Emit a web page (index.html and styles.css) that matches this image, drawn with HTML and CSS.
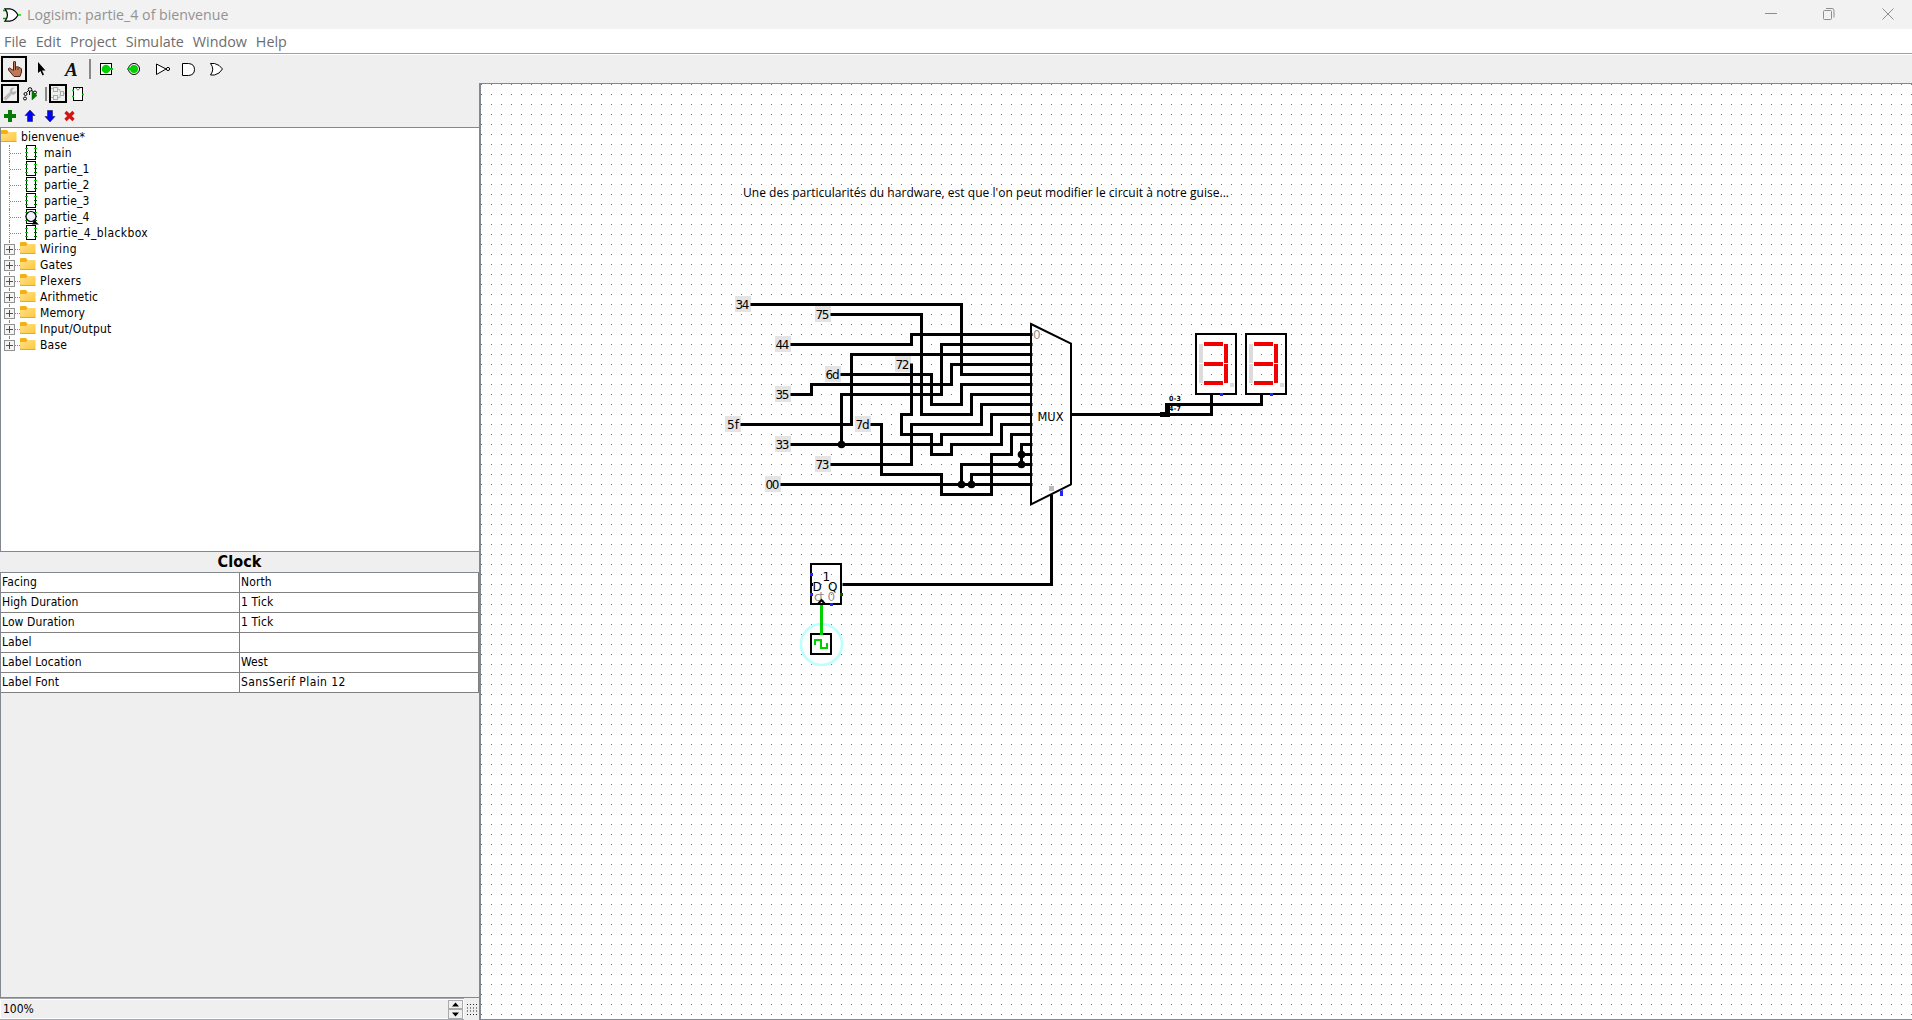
FILE: index.html
```html
<!DOCTYPE html>
<html lang="fr">
<head>
<meta charset="utf-8">
<title>Logisim: partie_4 of bienvenue</title>
<link rel="stylesheet" href="styles.css">
</head>
<body>
<svg class="defs" width="0" height="0">
  <defs>
    <linearGradient id="gold" x1="0" y1="0" x2="1" y2="1"><stop offset="0" stop-color="#ffe08a"/><stop offset="1" stop-color="#ffc83d"/></linearGradient>
    <symbol id="folder" viewBox="0 0 16 16"><path d="M0 3V2q0-1 1-1h5l1.500 2H15v3H0z" fill="#f5b010"/><path d="M0 5h6l1.500-2H15.500V12.500H0z" fill="url(#gold)"/><path d="M0 12.500h15.500" stroke="#eda720"/></symbol>
    <symbol id="chip" viewBox="0 0 17 16"><rect x="6.500" y=".5" width="9" height="14" fill="#fff" stroke="#000"/><path d="M5 3.500h3M5 7.500h3M5 11.500h3M14 3.500h3" stroke="#0c0"/><path d="M14 7.500h3M14 11.500h3" stroke="#060"/></symbol>
    <symbol id="lens" viewBox="0 0 20 16"><path d="M14 11l5 4.500h-7z" fill="#000"/><circle cx="11" cy="7.500" r="5" fill="#f0f0ff" stroke="#000" stroke-width="1.200"/></symbol>
    <symbol id="plus" viewBox="0 0 11 11"><rect x=".5" y=".5" width="10" height="10" fill="#f4f4f4" stroke="#919191"/><path d="M2 5.500h7M5.500 2v7" stroke="#3a4f8f"/></symbol>
    <pattern id="grid" patternUnits="userSpaceOnUse" x="481" y="84" width="10" height="10"><rect width="1" height="1" fill="#777"/></pattern>
  </defs>
</svg>
<div class="window">
  <header class="titlebar">
    <svg class="app-icon" width="18" height="14" viewBox="0 0 18 14"><path d="M0 2.500h5M0 10.500h5" stroke="#0a0" stroke-width="1.500"/><path d="M2 .8h5q5 .7 8 6.200q-3 5.500-8 6.200H2q5-6 0-12.400z" fill="#fff" stroke="#000" stroke-width="1.200"/><path d="M15 7h3" stroke="#0d0" stroke-width="1.500"/></svg>
    <span class="title">Logisim: partie_4 of bienvenue</span>
    <svg class="controls" width="130" height="16" viewBox="0 0 130 16" fill="none" stroke="#8e8e8e"><path d="M0 6.500h12"/><rect x="58.500" y="3.500" width="8" height="9" rx="1"/><path d="M61 1.500h6q2 0 2 2v7"/><path d="M117.500 1.500l11 11M128.500 1.500l-11 11"/></svg>
  </header>
  <nav class="menubar"><span>File</span><span>Edit</span><span>Project</span><span>Simulate</span><span>Window</span><span>Help</span></nav>
  <div class="toolbar">
    <svg width="240" height="28" viewBox="0 55 240 28" fill="none" stroke="#000">
      <rect x="2" y="57" width="24" height="24" stroke-width="2"/>
      <path d="M13.500 70.500V62q1-2 2 0v5q2-1 5 1l1 1v3l-1.500 4.500h-6L8.500 70q-.5-2 1-2l4 2.500z" fill="#c07858" stroke="#4b2415"/><path d="M15.500 67v3M18 68v2" stroke="#4b2415"/>
      <path d="M38 62v11l2.500-2 2 4.500 1.500-1-2-4h3.500z" fill="#000" stroke="none"/>
      <text x="65" y="76" class="text-tool">A</text>
      <path d="M90 59v20" stroke="#888" stroke-width="2"/>
      <rect x="100.500" y="63.500" width="11" height="11" fill="#fff"/><circle cx="106" cy="69" r="4.300" fill="#00d000" stroke="none"/><path d="M108 69h5" stroke="#00d000" stroke-width="2"/>
      <circle cx="134" cy="69" r="5.500" fill="#fff"/><circle cx="134" cy="69" r="4" fill="#00d000" stroke="none"/><path d="M127 69h5" stroke="#00d000" stroke-width="2"/>
      <path d="M156.500 64v10.500L166 69z" fill="#fff"/><circle cx="168" cy="69" r="1.600" fill="#fff"/>
      <path d="M182.500 63.500h6q6 .5 6 6t-6 6h-6z" fill="#fff"/>
      <path d="M210.500 63.500h4q5 1 8 5.500q-3 5-8 6h-4q4.500-6 0-11.500z" fill="#fff"/>
    </svg>
  </div>
  <div class="main">
    <aside class="explorer">
      <svg class="explorer-tools" width="120" height="44" viewBox="0 83 120 44" fill="none" stroke="#000">
        <rect x="2" y="85" width="16" height="17" stroke-width="2"/>
        <path d="M4.500 99.500l6-6" stroke="#bbb" stroke-width="3.500"/><path d="M10 93.500q-1-3.500 1.500-5.500l3-.5-2.500 3 1 1.500 3.500-1q-.5 3.500-3.500 4z" fill="#b4b4b4" stroke="none"/>
        <circle cx="30" cy="89.500" r="1.800"/><circle cx="25.500" cy="94" r="1.500"/><circle cx="25" cy="98.500" r="1.500"/><circle cx="35" cy="92.500" r="1.500"/><path d="M28.500 90.500l-2 2M31.500 90.500l2 1M29.500 91v4"/><path d="M32 91v9l5-4.500z" fill="#070" stroke="#060" stroke-width=".5"/>
        <path d="M46 87v14" stroke="#888" stroke-width="2"/>
        <rect x="50" y="85" width="16" height="17" stroke-width="2"/>
        <g stroke="#aaa"><rect x="53.500" y="87.500" width="4" height="4"/><rect x="53.500" y="95.500" width="4" height="4"/><rect x="60.500" y="91.500" width="3" height="4"/></g><path d="M51 88.500h2M51 97.500h2M58 89.500h2v3M58 97.500h2v-3M64 93.500h1" stroke="#9c9"/>
        <rect x="73.500" y="87.500" width="9" height="13" fill="#fff"/><path d="M76 88q2 4 4 0" stroke="#777"/><path d="M72 90.500h2M72 96.500h2M82 94.500h2" stroke="#0c0" stroke-width="1.500"/>
        <path d="M4 116h12M10 110v12" stroke="#087a08" stroke-width="4"/>
        <path d="M30 110l5 5.500h-2.500v6h-5v-6H25z" fill="#00f" stroke="#224" stroke-width=".6"/>
        <path d="M50 122l5-5.500h-2.500v-6h-5v6H45z" fill="#00f" stroke="#224" stroke-width=".6"/>
        <path d="M65.500 112l8 8M73.500 112l-8 8" stroke="#d31414" stroke-width="3.200"/>
      </svg>
      <div class="tree">
        <div class="row root"><svg width="16" height="16"><use href="#folder"/></svg><span>bienvenue*</span></div>
        <div class="row leaf"><svg width="20" height="16"><use href="#chip" width="17" height="16"/></svg><span>main</span></div>
        <div class="row leaf"><svg width="20" height="16"><use href="#chip" width="17" height="16"/></svg><span>partie_1</span></div>
        <div class="row leaf"><svg width="20" height="16"><use href="#chip" width="17" height="16"/></svg><span>partie_2</span></div>
        <div class="row leaf"><svg width="20" height="16"><use href="#chip" width="17" height="16"/></svg><span>partie_3</span></div>
        <div class="row leaf"><svg width="20" height="16"><use href="#chip" width="17" height="16"/><use href="#lens" width="20" height="16"/></svg><span>partie_4</span></div>
        <div class="row leaf"><svg width="20" height="16"><use href="#chip" width="17" height="16"/></svg><span class="loose">partie_4_blackbox</span></div>
        <div class="row lib"><svg class="knob" width="11" height="11"><use href="#plus"/></svg><svg width="16" height="16"><use href="#folder"/></svg><span class="loose">Wiring</span></div>
        <div class="row lib"><svg class="knob" width="11" height="11"><use href="#plus"/></svg><svg width="16" height="16"><use href="#folder"/></svg><span>Gates</span></div>
        <div class="row lib"><svg class="knob" width="11" height="11"><use href="#plus"/></svg><svg width="16" height="16"><use href="#folder"/></svg><span class="loose">Plexers</span></div>
        <div class="row lib"><svg class="knob" width="11" height="11"><use href="#plus"/></svg><svg width="16" height="16"><use href="#folder"/></svg><span>Arithmetic</span></div>
        <div class="row lib"><svg class="knob" width="11" height="11"><use href="#plus"/></svg><svg width="16" height="16"><use href="#folder"/></svg><span>Memory</span></div>
        <div class="row lib"><svg class="knob" width="11" height="11"><use href="#plus"/></svg><svg width="16" height="16"><use href="#folder"/></svg><span>Input/Output</span></div>
        <div class="row lib last"><svg class="knob" width="11" height="11"><use href="#plus"/></svg><svg width="16" height="16"><use href="#folder"/></svg><span>Base</span></div>
      </div>
      <h2 class="attr-title">Clock</h2>
      <div class="attr-pane">
        <div class="attrs">
          <span>Facing</span><span>North</span>
          <span>High Duration</span><span>1 Tick</span>
          <span>Low Duration</span><span>1 Tick</span>
          <span>Label</span><span></span>
          <span>Label Location</span><span>West</span>
          <span>Label Font</span><span class="loose">SansSerif Plain 12</span>
        </div>
      </div>
      <div class="status">
        <div class="zoom"><span>100%</span>
          <svg width="15" height="19" viewBox="0 0 15 19"><rect x=".5" y=".5" width="14" height="8" fill="#f0f0f0" stroke="#aaa"/><rect x=".5" y="9.500" width="14" height="9" fill="#f0f0f0" stroke="#aaa"/><path d="M4 6.500h7L7.500 2.500zM4 12.500h7L7.500 16.500z"/></svg>
        </div>
        <svg width="13" height="11" viewBox="0 0 13 11"><path d="M1 .5h11M1 4h11M1 7h11M1 10.500h11" stroke="#222" stroke-dasharray="1 2"/></svg>
      </div>
    </aside>
    <svg class="canvas" width="1431" height="935" viewBox="481 84 1431 935">
      <rect x="481" y="84" width="1431" height="935" fill="#fff"/>
      <rect x="481" y="84" width="1431" height="935" fill="url(#grid)"/>
      <text x="743" y="197" class="note" textLength="486" lengthAdjust="spacing">Une des particularités du hardware, est que l'on peut modifier le circuit à notre guise...</text>
      <g class="constants">
        <rect x="735" y="296" width="16" height="16"/><rect x="815" y="306" width="16" height="16"/><rect x="775" y="336" width="16" height="16"/><rect x="895" y="356" width="16" height="16"/><rect x="825" y="366" width="16" height="16"/><rect x="775" y="386" width="16" height="16"/><rect x="725" y="416" width="16" height="16"/><rect x="855" y="416" width="16" height="16"/><rect x="775" y="436" width="16" height="16"/><rect x="815" y="456" width="16" height="16"/><rect x="765" y="476" width="16" height="16"/>
      </g>
      <g class="constant-values">
        <text x="735.500" y="309" textLength="14">34</text><text x="815.500" y="319" textLength="14">75</text><text x="775.500" y="349" textLength="14">44</text><text x="895.500" y="369" textLength="14">72</text><text x="825.500" y="379" textLength="14">6d</text><text x="775.500" y="399" textLength="14">35</text><text x="727" y="429" textLength="12">5f</text><text x="855.500" y="429" textLength="14">7d</text><text x="775.500" y="449" textLength="14">33</text><text x="815.500" y="469" textLength="14">73</text><text x="765.500" y="489" textLength="14">00</text>
      </g>
      <g transform="translate(.5 .5)">
        <g class="wires">
          <path d="M750 304H961V374H1032"/>
          <path d="M830 314H921V414H971V394H1032"/>
          <path d="M790 344H911V334H1032"/>
          <path d="M841 444V394H941V344H1032"/>
          <path d="M740 424H851V354H1032"/>
          <path d="M790 394H811V384H951V364H1032"/>
          <path d="M840 374H931V404H961V384H1032"/>
          <path d="M830 464H911V424H981V404H1032"/>
          <path d="M790 444H941V434H991V414H1032"/>
          <path d="M911 363V414H901V434H931V454H951V444H1001V424H1032"/>
          <path d="M870 424H881V474H941V494H991V454H1011V434H1032"/>
          <path d="M1021 464V444H1032M1021 454H1032"/>
          <path d="M961 484V464H1032M971 484V474H1032"/>
          <path d="M780 484H1032"/>
          <path d="M1051 494V584H842"/>
          <path d="M1071 414H1211V394M1166 404H1261V394"/>
        </g>
        <circle cx="841" cy="444" r="3.800"/><circle cx="1021" cy="454" r="3.800"/><circle cx="1021" cy="464" r="3.800"/><circle cx="961" cy="484" r="3.800"/><circle cx="971" cy="484" r="3.800"/>
      </g>
      <path class="outline" d="M1031 324L1071 343.500V484.500L1031 504.500Z"/>
      <text x="1033" y="338.500" class="dim">0</text>
      <text x="1037.500" y="421" class="part" textLength="26" lengthAdjust="spacingAndGlyphs">MUX</text>
      <rect x="1049" y="486" width="5" height="5" fill="#bbb"/><path d="M1060 491l3-1v6h-3z" fill="#22f"/>
      <path d="M1160 412h5v-9h5v14h-10z"/>
      <g class="tiny"><text x="1169" y="401" textLength="12">0-3</text><text x="1169" y="411" textLength="12">4-7</text></g>
      <g id="digit">
        <rect class="outline" x="1196" y="334" width="40" height="60"/>
        <path fill="#dcdcdc" d="M1199 344h4v19h-4zM1199 364h4v19h-4zM1230 383h4v4h-4z"/>
        <path fill="#f00000" d="M1204 342h19v4h-19zM1204 362h19v4h-19zM1204 381h19v4h-19zM1224 344h4v19h-4zM1224 364h4v19h-4z"/>
        <path fill="#22f" d="M1220 393h3v3h-3z"/>
      </g>
      <use href="#digit" x="50"/>
      <rect class="outline" x="811" y="564" width="30" height="40"/>
      <g class="part"><text x="822.500" y="581">1</text><text x="812.500" y="591">D</text><text x="828" y="591">Q</text></g>
      <g class="dim"><text x="814" y="601" textLength="10">ct</text><text x="827.500" y="601">0</text></g>
      <path d="M818 604l3.500-4 3.500 4" fill="none" stroke="#000" stroke-width="2"/>
      <path fill="#22f" d="M810 573h3v3h-3zM810 593h3v3h-3zM830 603h3v3h-3z"/><path fill="#005500" d="M840 593h3v3h-3z"/><path d="M810 583h3v3h-3z"/>
      <circle cx="821.500" cy="644.500" r="20.500" fill="none" stroke="#bff" stroke-width="2.500"/>
      <rect class="outline" x="811" y="634" width="20" height="20"/>
      <path d="M821.500 605v30" stroke="#00d000" stroke-width="3"/>
      <path d="M815 645v-5h6v8h6v-5" fill="none" stroke="#00d000" stroke-width="2"/>
    </svg>
  </div>
</div>
</body>
</html>
```
FILE: styles.css
```css
* { box-sizing: border-box; }
body { margin: 0; overflow: hidden; font: 12px "DejaVu Sans Condensed", "DejaVu Sans", sans-serif; font-stretch: condensed; color: #000; }
svg { display: block; flex: none; }
.defs { position: absolute; }
.window { display: flex; flex-direction: column; width: 1912px; height: 1020px; background: #efefef; }
.titlebar { display: flex; align-items: center; height: 29px; padding: 0 17px 0 3px; background: #f2f2f2; font-family: "Open Sans", sans-serif; font-stretch: normal; font-size: 14.2px; color: #929292; }
.title { margin-left: 6px; }
.controls { margin-left: auto; }
.menubar { display: flex; gap: 9px; height: 25px; padding-left: 4px; align-items: center; background: #fff; border-bottom: 1px solid #a0a0a0; font-family: "Open Sans", sans-serif; font-stretch: normal; font-size: 14.3px; color: #6d6d6d; }
.toolbar { height: 29px; border-top: 1px solid #fff; }
.text-tool { font: italic bold 19px "Liberation Serif", serif; fill: #111; stroke: none; }
.main { display: flex; height: 937px; }
.explorer { display: flex; flex-direction: column; width: 481px; border-right: 2px solid #828790; }
.tree { height: 425px; background: #fff; border: 1px solid #828790; border-right: 0; letter-spacing: .2px; }
.row { display: flex; align-items: center; height: 16px; position: relative; white-space: nowrap; }
.row:first-child { margin-top: 1px; }
.row span { padding-bottom: 1px; }
.root span { margin-left: 4px; }
.leaf { padding-left: 19px; }
.leaf span { margin-left: 4px; }
.leaf .loose { letter-spacing: .38px; }
.loose { letter-spacing: .42px; }
.lib { padding-left: 3px; }
.lib svg + svg { margin-left: 5px; }
.lib span { margin-left: 4px; }
.knob { position: relative; z-index: 1; }
.leaf::before, .lib::before { content: ""; position: absolute; left: 8px; top: 0; height: 16px; border-left: 1px dotted #888; }
.lib.last::before { height: 8px; }
.leaf::after { content: ""; position: absolute; left: 9px; top: 8px; width: 11px; border-top: 1px dotted #888; }
.lib::after { content: ""; position: absolute; left: 14px; top: 8px; width: 5px; border-top: 1px dotted #888; }
.attr-title { margin: 0; height: 20px; line-height: 20px; text-align: center; font-size: 16px; font-weight: bold; letter-spacing: .1px; }
.attr-pane { flex: 1; border: 1px solid #828790; border-right: 0; }
.attrs { display: grid; grid-template-columns: 239px 239px; grid-auto-rows: 20px; }
.attrs span { background: #fff; border-right: 1px solid #808080; border-bottom: 1px solid #808080; padding-left: 1px; line-height: 19px; }
.attrs span:not(.loose) { letter-spacing: .1px; }
.status { display: flex; align-items: center; gap: 2px; height: 22px; }
.zoom { display: flex; align-items: center; justify-content: space-between; width: 465px; height: 22px; padding: 0 1px 0 3px; border: 1px solid #a4a7ae; border-left: 0; border-right: 0; box-shadow: inset 0 0 0 1px #fff; }
.canvas { border-top: 1px solid #828790; border-bottom: 1px solid #828790; height: 937px; }
.note { font-family: "Open Sans", sans-serif; font-size: 12px; font-stretch: normal; }
.constant-values, .part, .dim { font: 12px "DejaVu Sans", sans-serif; }
.constants { fill: #e4e4e4; }
.dim { fill: #929292; }
.tiny { font: bold 7px "DejaVu Sans Condensed", sans-serif; }
.wires { fill: none; stroke: #000; stroke-width: 3; }
.outline { fill: none; stroke: #000; stroke-width: 2; }
```
